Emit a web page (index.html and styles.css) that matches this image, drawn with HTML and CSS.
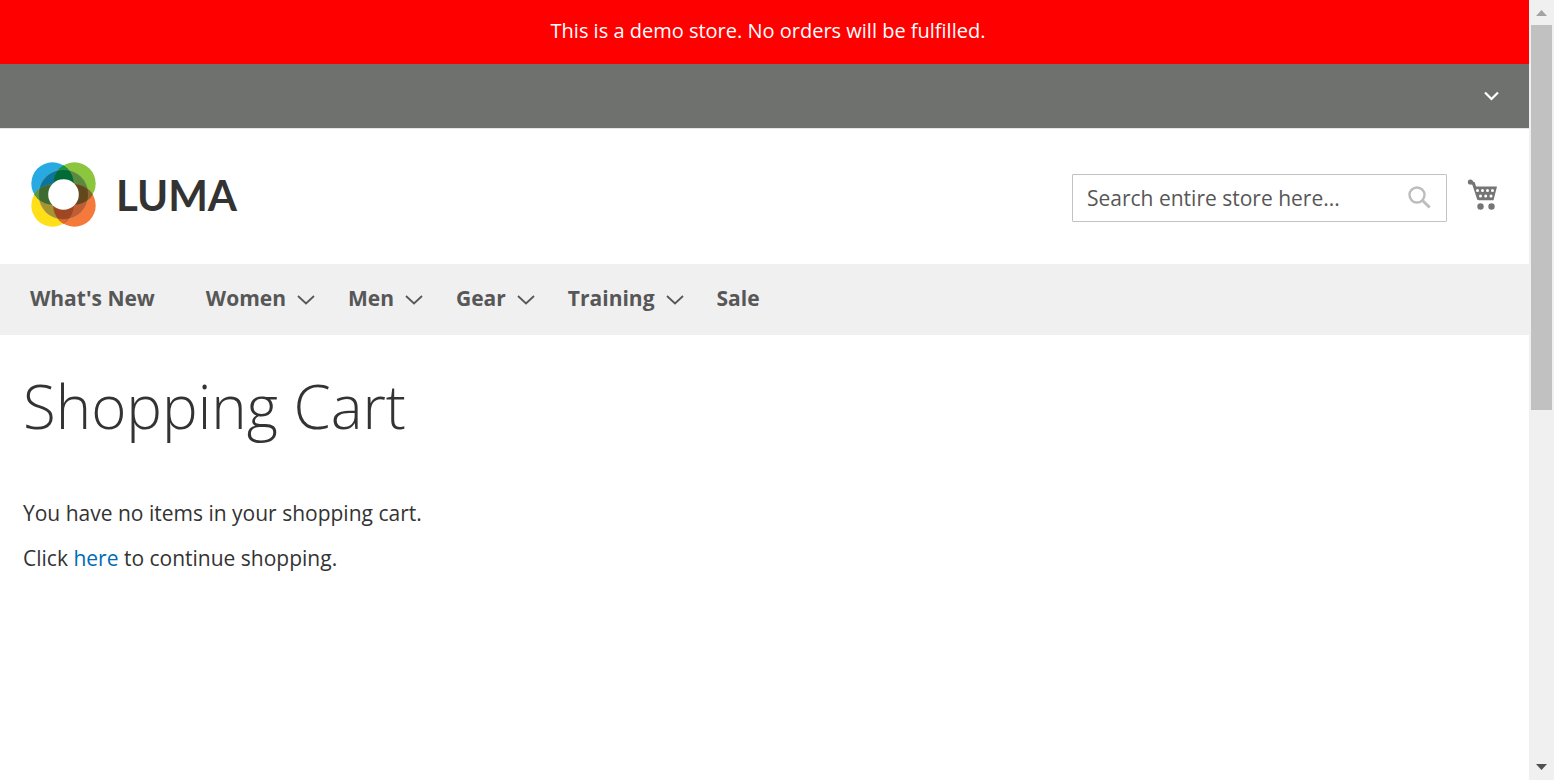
FILE: index.html
```html
<!DOCTYPE html>
<html lang="en">
<head>
<meta charset="utf-8">
<title>Shopping Cart</title>
<link rel="stylesheet" href="styles.css">
</head>
<body>
<div class="viewport">
  <div class="page">
    <p class="demo-notice">This is a demo store. No orders will be fulfilled.</p>
    <div class="panel">
      <button class="icon-button" type="button" aria-label="Account menu">
        <svg width="16" height="10" viewBox="0 0 16 10"><path d="M2 1.500 8.500 8 15 1.500" fill="none" stroke="#fff" stroke-width="2.200"/></svg>
      </button>
    </div>
    <header class="header">
      <a class="logo" href="#">
        <svg width="66" height="66" viewBox="0 0 66 66" aria-hidden="true">
          <defs>
            <clipPath id="tl"><circle cx="21.500" cy="21.500" r="21.200"/></clipPath>
            <clipPath id="tr"><circle cx="43.500" cy="21.500" r="21.200"/></clipPath>
            <clipPath id="bl"><circle cx="21.500" cy="43.500" r="21.200"/></clipPath>
            <clipPath id="br"><circle cx="43.500" cy="43.500" r="21.200"/></clipPath>
          </defs>
          <circle cx="21.500" cy="21.500" r="21.200" fill="#27a9e1"/>
          <circle cx="43.500" cy="21.500" r="21.200" fill="#8cc63f"/>
          <circle cx="21.500" cy="43.500" r="21.200" fill="#ffdf17"/>
          <circle cx="43.500" cy="43.500" r="21.200" fill="#f4793b"/>
          <circle cx="32.500" cy="32.500" r="25" fill="#0b759f" clip-path="url(#tl)"/>
          <circle cx="32.500" cy="32.500" r="25" fill="#598a3d" clip-path="url(#tr)"/>
          <circle cx="32.500" cy="32.500" r="25" fill="#a69334" clip-path="url(#bl)"/>
          <circle cx="32.500" cy="32.500" r="25" fill="#c05d34" clip-path="url(#br)"/>
          <g clip-path="url(#tl)">
            <circle cx="43.500" cy="21.500" r="21.200" fill="#006b37"/>
            <circle cx="21.500" cy="43.500" r="21.200" fill="#3d6b31"/>
          </g>
          <g clip-path="url(#br)">
            <circle cx="43.500" cy="21.500" r="21.200" fill="#63481d"/>
            <circle cx="21.500" cy="43.500" r="21.200" fill="#9f4723"/>
          </g>
          <path d="M32.500 3.300 27.500 8 Q32.500 6.500 37.500 8Z" fill="#0f9a48"/>
          <path d="M32.500 61.700 27.500 57 Q32.500 58.500 37.500 57Z" fill="#e8672c"/>
          <path d="M3.300 32.500 8 27.500 Q6.500 32.500 8 37.500Z" fill="#5c9b3c"/>
          <path d="M61.700 32.500 57 27.500 Q58.500 32.500 57 37.500Z" fill="#8a6a2c"/>
          <circle cx="32.500" cy="32.500" r="25" fill="none" stroke="#c3b37a" stroke-opacity=".45" stroke-width=".6"/>
          <circle cx="32.500" cy="32.500" r="15.300" fill="#fff"/>
        </svg>
        <span class="wordmark">LUMA</span>
      </a>
      <div class="tools">
        <form class="search">
          <input class="search-input" type="text" aria-label="Search" placeholder="Search entire store here...">
          <button class="icon-button search-button" type="button" aria-label="Search">
            <svg width="24" height="24" viewBox="0 0 24 24" fill="none" stroke="#bdbdbd"><circle cx="9" cy="9" r="7.500" stroke-width="2.400"/><path d="m14.500 14.500 7.200 7" stroke-width="3"/></svg>
          </button>
        </form>
        <a class="cart" href="#" aria-label="My Cart">
          <svg width="32" height="32" viewBox="0 0 32 32">
            <path d="M3 3 6 4 11.500 21.300H26.500L30 7.500H8" fill="#757575"/>
            <path d="M3.300 3.200 6.500 4.500 11.800 20.500" fill="none" stroke="#757575" stroke-width="3"/>
            <circle cx="3.400" cy="3" r="2.600" fill="#757575"/>
            <g fill="#fff"><circle cx="10.500" cy="11.500" r="1.500"/><circle cx="15.500" cy="11.500" r="1.500"/><circle cx="20.500" cy="11.500" r="1.500"/><circle cx="25.500" cy="11.500" r="1.500"/><circle cx="13.500" cy="17" r="1.500"/><circle cx="18.700" cy="17" r="1.500"/><circle cx="24" cy="17" r="1.500"/></g>
            <g fill="#757575"><circle cx="13.500" cy="27.500" r="3.200"/><circle cx="24.500" cy="27.500" r="3.200"/></g>
          </svg>
        </a>
      </div>
    </header>
    <nav class="nav">
      <a class="nav-link nav-plain" href="#">What's New</a>
      <a class="nav-link" href="#">Women<svg class="chevron" viewBox="0 0 18 10"><path d="m1 1 8 7.500L17 1"/></svg></a>
      <a class="nav-link" href="#">Men<svg class="chevron" viewBox="0 0 18 10"><path d="m1 1 8 7.500L17 1"/></svg></a>
      <a class="nav-link" href="#">Gear<svg class="chevron" viewBox="0 0 18 10"><path d="m1 1 8 7.500L17 1"/></svg></a>
      <a class="nav-link" href="#">Training<svg class="chevron" viewBox="0 0 18 10"><path d="m1 1 8 7.500L17 1"/></svg></a>
      <a class="nav-link" href="#">Sale</a>
    </nav>
    <main class="content">
      <h1 class="title">Shopping Cart</h1>
      <p class="message">You have no items in your shopping cart.</p>
      <p class="message">Click <a class="link" href="#">here</a> to continue shopping.</p>
    </main>
  </div>
  <div class="scrollbar" aria-hidden="true">
    <svg class="arrow" viewBox="0 0 25 25"><path d="M7 16h11l-5.500-6z" fill="#a3a3a3"/></svg>
    <div class="track"><div class="thumb"></div></div>
    <svg class="arrow" viewBox="0 0 25 25"><path d="M7 9h11l-5.500 6z" fill="#505050"/></svg>
  </div>
</div>
</body>
</html>
```
FILE: styles.css
```css
* { box-sizing: border-box; }

body {
  margin: 0;
  background: #fff;
  color: #333;
  font: 21px/32px "Open Sans", "Noto Sans", sans-serif;
}

a { color: inherit; text-decoration: none; }
p, h1 { margin: 0; }
svg { display: block; flex: none; }

.viewport { display: flex; height: 100vh; }
.page { flex: 1; min-width: 0; overflow: hidden; }

.demo-notice {
  padding: 15px 0 17px 7px;
  background: #f00;
  color: #fff;
  font-size: 20px;
  text-align: center;
}

.panel {
  display: flex;
  align-items: center;
  justify-content: flex-end;
  min-height: 64px;
  padding: 0 30px;
  background: #6e716e;
}

.icon-button { padding: 0; border: 0; background: none; cursor: pointer; }

.header {
  display: flex;
  align-items: center;
  justify-content: space-between;
  padding: 33px 30px 36px 31px;
  border-top: 1px solid #e4e4e4;
}

.logo { display: flex; align-items: center; gap: 19px; }
.wordmark { font: 700 42px/64px Lato, sans-serif; }

.tools { display: flex; align-items: center; gap: 20px; padding-top: 6px; }
.cart { padding-bottom: 6px; }
.search { display: flex; position: relative; }

.search-input {
  width: 375px;
  height: 48px;
  padding: 0 48px 0 14px;
  border: 1px solid #c2c2c2;
  border-radius: 1px;
  background: #fff;
  color: #333;
  font: inherit;
}

.search-input::placeholder { color: #575757; opacity: 1; }
.search-button { position: absolute; top: 12px; right: 15px; }

.nav {
  display: flex;
  gap: 33px;
  padding: 18px 30px 21px;
  background: #f0f0f0;
  color: #575757;
  font-weight: 700;
}

.nav-link { display: flex; align-items: center; gap: 11px; }
.nav-plain { padding-right: 18px; }

.chevron {
  width: 18px;
  height: 10px;
  margin-top: 4px;
  fill: none;
  stroke: #575757;
  stroke-width: 1.8;
}

.content { padding: 35px 23px; }
.title { margin-bottom: 55px; font-size: 60px; font-weight: 300; line-height: 72px; }
.message { margin-bottom: 13px; }
.link { color: #006bb4; }

.scrollbar { display: flex; flex-direction: column; width: 25px; background: #f0f0f0; }
.arrow { width: 25px; height: 25px; }
.track { flex: 1; padding: 0 2px; }
.thumb { height: 52.7%; background: #c1c1c1; }
```
